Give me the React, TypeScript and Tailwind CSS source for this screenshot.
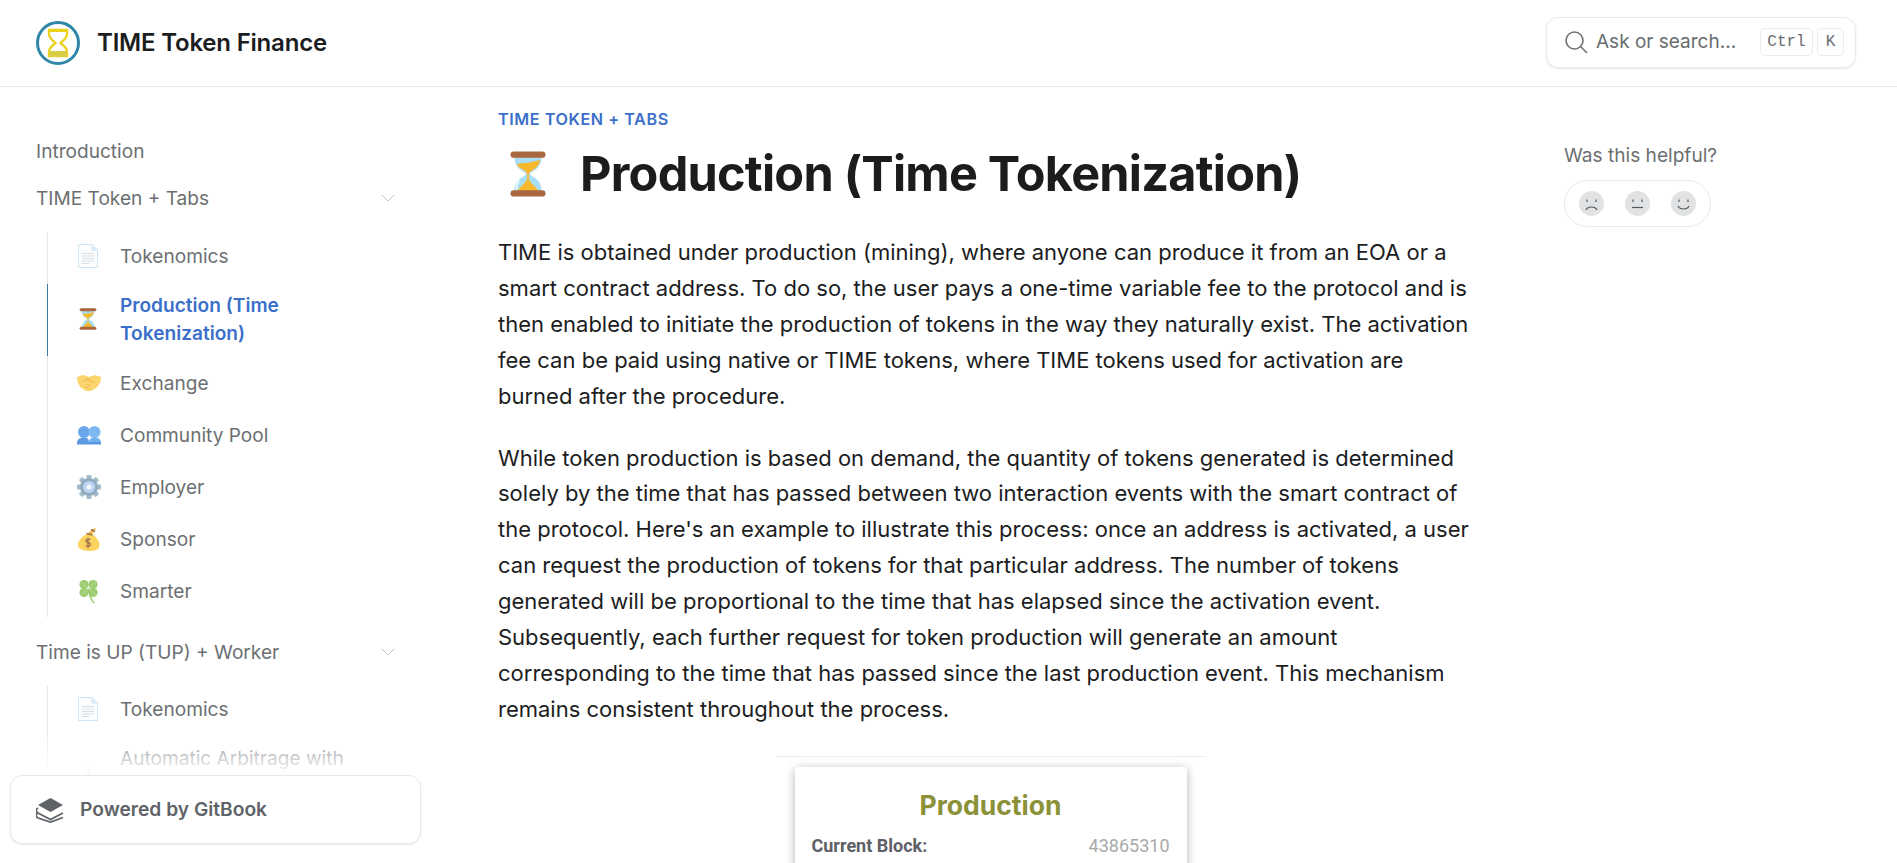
import React from "react";

const Hourglass = ({ s = 24 }: { s?: number }) => (
  <svg width={s} height={s} viewBox="0 0 40 40">
    <path d="M9 5 C9 17 17 17 18.5 20 C17 23 9 23 9 35 H31 C31 23 23 23 21.5 20 C23 17 31 17 31 5Z" fill="#a9dcf5" />
    <path d="M11 12 C15 11 24 11 29.5 8.5 C29 16 22.5 16 20.8 19.6 H19.2 C17.5 16 12.5 16 11 12Z" fill="#f6b92c" />
    <path d="M19.3 19 h1.4 v5 C22 28 27 30 28.5 34 H11.5 C13 30 18 28 19.3 24Z" fill="#f6b92c" />
    <path d="M13 25 C11 28 10.5 30 10.5 33" stroke="#e6f6fe" strokeWidth="1.6" fill="none" />
    <rect x="6" y="2" width="28" height="5" rx="2.5" fill="#a8673f" />
    <rect x="6" y="33" width="28" height="5" rx="2.5" fill="#a8673f" />
  </svg>
);

const Page = () => (
  <svg width="24" height="26" viewBox="0 0 24 26">
    <path d="M2.5 1.5 H16 L21.5 7 V24.5 H2.5Z" fill="#fbfdff" stroke="#cfe6f5" strokeWidth="1" />
    <path d="M16 1.5 V7 H21.5" fill="#dcEEf9" stroke="#cfe6f5" strokeWidth="1" />
    <path d="M6 10.5 H18 M6 13 H18 M6 15.5 H18 M6 18 H18 M6 20.5 H13" stroke="#d5d9dc" strokeWidth="0.9" />
  </svg>
);

const Handshake = () => (
  <svg width="26" height="26" viewBox="0 0 26 26">
    <path d="M1 7 L7 5 L13 7 L19 5 L25 7 C25 13 22 19 14 21 C11 22 5 19 3 15 C1.5 12 1 10 1 7Z" fill="#fbd46d" />
    <path d="M8 11 L12 9 L18 13 M11 14 L14 16 M9 16 L12 18" stroke="#eeb143" strokeWidth="1" fill="none" />
  </svg>
);

const Busts = () => (
  <svg width="26" height="26" viewBox="0 0 26 26">
    <circle cx="8" cy="10" r="6" fill="#6aa7ea" />
    <circle cx="18.5" cy="10" r="6" fill="#7db8f0" />
    <path d="M1 21 C1 17 4 15.5 8 15.5 C12 15.5 13 17 13 21Z" fill="#5f9de3" />
    <path d="M13 21 C13 17 15 15.5 18.5 15.5 C22 15.5 25 17 25 21Z" fill="#6fb0ee" />
    <rect x="1" y="20" width="24" height="2.5" fill="#5c98e0" />
  </svg>
);

const Gear = () => (
  <svg width="26" height="26" viewBox="0 0 26 26">
    <g fill="#a3bccb">
      <rect x="10.5" y="1" width="5" height="24" rx="1" />
      <rect x="10.5" y="1" width="5" height="24" rx="1" transform="rotate(45 13 13)" />
      <rect x="10.5" y="1" width="5" height="24" rx="1" transform="rotate(90 13 13)" />
      <rect x="10.5" y="1" width="5" height="24" rx="1" transform="rotate(135 13 13)" />
    </g>
    <circle cx="13" cy="13" r="9" fill="#90acbd" />
    <circle cx="13" cy="13" r="6" fill="#bcd6f4" />
    <circle cx="13" cy="13" r="2.5" fill="#f4f8fb" />
  </svg>
);

const MoneyBag = () => (
  <svg width="26" height="26" viewBox="0 0 26 26">
    <path d="M11 8 C5 11 1 16 2 20 C3 24 9 25 14 25 C20 25 24 23 23.5 18 C23 14 19 10 16 8Z" fill="#fad45f" />
    <path d="M11 8 L17 3 L20 2 L19 5 L16 8Z" fill="#f2bd47" />
    <path d="M10.5 7.5 L16.5 9 M15 3.5 L19 5.5" stroke="#a5714f" strokeWidth="1.6" />
    <path d="M14.5 13.5 C12 12.5 9.5 13.5 10 15.5 C10.5 17 14 16.5 14.5 18.2 C15 20 11.5 20.8 9.5 19.5 M12 11.5 V22" stroke="#a5714f" strokeWidth="1.4" fill="none" />
  </svg>
);

const Clover = () => (
  <svg width="26" height="26" viewBox="0 0 26 26">
    <g fill="#9ccd72">
      <circle cx="8" cy="6.5" r="4.6" />
      <circle cx="17" cy="6.5" r="4.6" />
      <circle cx="8" cy="14.5" r="4.6" />
      <circle cx="17" cy="14.5" r="4.6" />
    </g>
    <path d="M12.5 10.5 L5 4 M12.5 10.5 L20 4 M12.5 10.5 L5 17 M12.5 10.5 L20 17" stroke="#b9de97" strokeWidth="0.9" />
    <path d="M12.5 10.5 C13 16 14.5 21 18 25" stroke="#9ccd72" strokeWidth="1.6" fill="none" />
  </svg>
);

const Peak = () => (
  <svg width="26" height="26" viewBox="0 0 26 26">
    <path d="M11.5 9 L12.5 5 L13.5 9 L19 25 H6Z" fill="#c6cacd" />
  </svg>
);

const Chevron = () => (
  <svg width="14" height="8" viewBox="0 0 14 8" fill="none" stroke="#c4c6c8" strokeWidth="1">
    <path d="M0.5 0.5 L7 7 L13.5 0.5" />
  </svg>
);

const Logo = () => (
  <svg width="44" height="44" viewBox="0 0 44 44">
    <circle cx="22" cy="22" r="20.5" fill="#fff" stroke="#2f87a8" strokeWidth="3" />
    <path d="M13 9 H31 V13 C31 18 26 20 24.5 22 C26 24 31 26 31 31 V35 H13 V31 C13 26 18 24 19.5 22 C18 20 13 18 13 13Z" fill="#fff" stroke="#ecd21f" strokeWidth="2.4" />
    <rect x="12" y="8" width="20" height="3" fill="#ecd21f" />
    <rect x="13" y="30" width="18" height="6" fill="#d9cd45" />
  </svg>
);

const Face = ({ mouth }: { mouth: string }) => (
  <svg width="25" height="25" viewBox="0 0 25 25">
    <circle cx="12.5" cy="12.5" r="12.5" fill="#e1e2e3" />
    <path d="M8 8.5 V11 M17 8.5 V11" stroke="#55595c" strokeWidth="1.2" />
    <path d={mouth} stroke="#55595c" strokeWidth="1.2" fill="none" />
  </svg>
);

const rows: [React.ReactNode, string][] = [
  [<Handshake />, "Exchange"],
  [<Busts />, "Community Pool"],
  [<Gear />, "Employer"],
  [<MoneyBag />, "Sponsor"],
  [<Clover />, "Smarter"],
];

const Row = ({ icon, label }: { icon: React.ReactNode; label: string }) => (
  <div className="flex h-[52.2px] items-center pl-[28px] pt-[1px] text-[#6c6f71]">
    <span className="flex w-[44px] shrink-0 justify-start">{icon}</span>
    <span>{label}</span>
  </div>
);

const FirstRow = () => (
  <div className="flex h-[52px] items-center pb-[5px] pl-[28px] text-[#6c6f71]">
    <span className="flex w-[44px] shrink-0 justify-start"><Page /></span>
    <span>Tokenomics</span>
  </div>
);

const Section = ({ label }: { label: string }) => (
  <div className="flex h-[47px] items-center justify-between pr-[39px] text-[#6c6f71]">
    <span>{label}</span>
    <Chevron />
  </div>
);

export default function App() {
  return (
    <div className="relative flex h-screen flex-col overflow-hidden bg-white font-['Inter',sans-serif] text-[#1c1d1e]">
      <header className="flex h-[87px] shrink-0 items-center justify-between border-b border-[#ebebeb] pb-[2px] pl-[36px] pr-[41px]">
        <div className="mt-[2px] flex items-center gap-[17px]">
          <Logo />
          <span className="text-[24px] font-semibold tracking-[-0.2px]">TIME Token Finance</span>
        </div>
        <div className="flex h-[51px] w-[310px] items-center rounded-[12px] border border-[#e9eaea] pl-[17px] pr-[11px] text-[19px] text-[#696c6e] shadow-[0_1px_2px_rgba(0,0,0,0.1)]">
          <svg width="24" height="24" viewBox="0 0 24 24" fill="none" stroke="#6f7274" strokeWidth="1.6">
            <circle cx="10.5" cy="10.5" r="8.5" />
            <path d="M16.5 16.5 L23 23" />
          </svg>
          <span className="ml-[8px] flex-1">Ask or search...</span>
          <kbd className="flex h-[28px] w-[53px] items-center justify-center rounded-[5px] border border-[#ececec] font-['Liberation_Mono',monospace] text-[16px]">Ctrl</kbd>
          <kbd className="ml-[4px] flex h-[28px] w-[27px] items-center justify-center rounded-[5px] border border-[#ececec] font-['Liberation_Mono',monospace] text-[16px]">K</kbd>
        </div>
      </header>

      <div className="flex min-h-0 flex-1">
        <aside className="w-[498px] shrink-0 overflow-hidden pl-[36px] pr-[64px] pt-[40px] text-[19.1px] leading-[28px]">
          <div className="flex h-[47px] items-center text-[#6c6f71]">Introduction</div>
          <Section label="TIME Token + Tabs" />
          <div className="mb-[12px] ml-[11px] mt-[11px] border-l border-[#e5e6e6]">
            <FirstRow />
            <div className="-ml-px flex h-[72px] items-center border-l border-[#3c7da6] pb-[2px] pl-[28px] font-semibold leading-[28px] text-[#3b6fcb]">
              <span className="flex w-[44px] shrink-0"><Hourglass /></span>
              <span>Production (Time<br />Tokenization)</span>
            </div>
            {rows.map(([icon, label]) => (
              <Row key={label} icon={icon} label={label} />
            ))}
          </div>
          <Section label="Time is UP (TUP) + Worker" />
          <div className="ml-[11px] mt-[10px] border-l border-[#e5e6e6]">
            <FirstRow />
            <div className="flex h-[72px] items-center pb-[3px] pl-[28px] text-[#6c6f71]">
              <span className="flex w-[44px] shrink-0"><Peak /></span>
              <span>Automatic Arbitrage with<br />Worker</span>
            </div>
          </div>
        </aside>

        <main className="w-[985px] shrink-0 text-[22px] leading-[35.9px]">
          <div className="mt-[19px] text-[16.2px] font-semibold uppercase leading-[26px] tracking-[0.55px] text-[#3b6fcb]">TIME Token + Tabs</div>
          <h1 className="mt-[9px] flex h-[66px] items-center text-[48.6px] font-bold tracking-[-0.75px] text-[#1b1c1d]">
            <span className="ml-[5px] mr-[27px] flex w-[50px] justify-center"><Hourglass s={58} /></span>
            Production (Time Tokenization)
          </h1>
          <p className="mt-[28px] w-[974px]">
            TIME is obtained under production (mining), where anyone can produce it from an EOA or a smart contract address. To do so, the user pays a one-time variable fee to the protocol and is then enabled to initiate the production of tokens in the way they naturally exist. The activation fee can be paid using native or TIME tokens, where TIME tokens used for activation are burned after the procedure.
          </p>
          <p className="mt-[26px] w-[974px]">
            While token production is based on demand, the quantity of tokens generated is determined solely by the time that has passed between two interaction events with the smart contract of the protocol. Here's an example to illustrate this process: once an address is activated, a user can request the production of tokens for that particular address. The number of tokens generated will be proportional to the time that has elapsed since the activation event. Subsequently, each further request for token production will generate an amount corresponding to the time that has passed since the last production event. This mechanism remains consistent throughout the process.
          </p>
          <div className="mx-auto mt-[28px] w-[430px] border-t border-[#eeeeee] pt-[10px]">
            <div className="mx-auto h-[200px] w-[392px] rounded-[3px] bg-white px-[17px] pt-[19px] font-['Roboto',sans-serif] shadow-[0_2px_10px_rgba(0,0,0,0.3)]">
              <div className="text-center font-['Inter',sans-serif] text-[26.5px] font-bold leading-[38px] text-[#8b9137]">Production</div>
              <div className="mt-[10px] flex justify-between text-[18px] leading-[24px]">
                <span className="font-bold text-[#5d6066]">Current Block:</span>
                <span className="text-[#a9a9a9]">43865310</span>
              </div>
            </div>
          </div>
        </main>

        <div className="ml-[81px] pt-[54px]">
          <div className="text-[19.1px] leading-[28px] text-[#6c6f71]">Was this helpful?</div>
          <div className="mt-[11px] flex h-[47px] w-[147px] items-center justify-between rounded-full border border-[#e9e9e9] px-[14px]">
            <Face mouth="M7 19 C9 15 16 15 18 19" />
            <Face mouth="M7 16.5 H18" />
            <Face mouth="M7 15 C9 19 16 19 18 15" />
          </div>
        </div>
      </div>

      <div className="pointer-events-none absolute left-0 top-[725px] h-[50px] w-[434px] bg-gradient-to-b from-transparent to-white" />
      <div className="absolute left-[10px] top-[775px] flex h-[69px] w-[411px] items-center rounded-[12px] border border-[#e6e7e7] bg-white pl-[25px] text-[19.2px] font-semibold text-[#5f6368] shadow-[0_1px_2px_rgba(0,0,0,0.08)]">
        <svg width="29" height="26" viewBox="0 0 29 26" className="mr-[15px]">
          <path d="M14.5 1 L27 8 L14.5 15 L2 8Z" fill="#5f6368" />
          <path d="M2 11 C-0.5 12.5 0 15 2 16 L14.5 22.5 L27 16 M2 15.5 C-0.5 17 0 20 2 21 L14.5 25 L27 20.5" fill="none" stroke="#5f6368" strokeWidth="1.8" />
        </svg>
        Powered by GitBook
      </div>
    </div>
  );
}
